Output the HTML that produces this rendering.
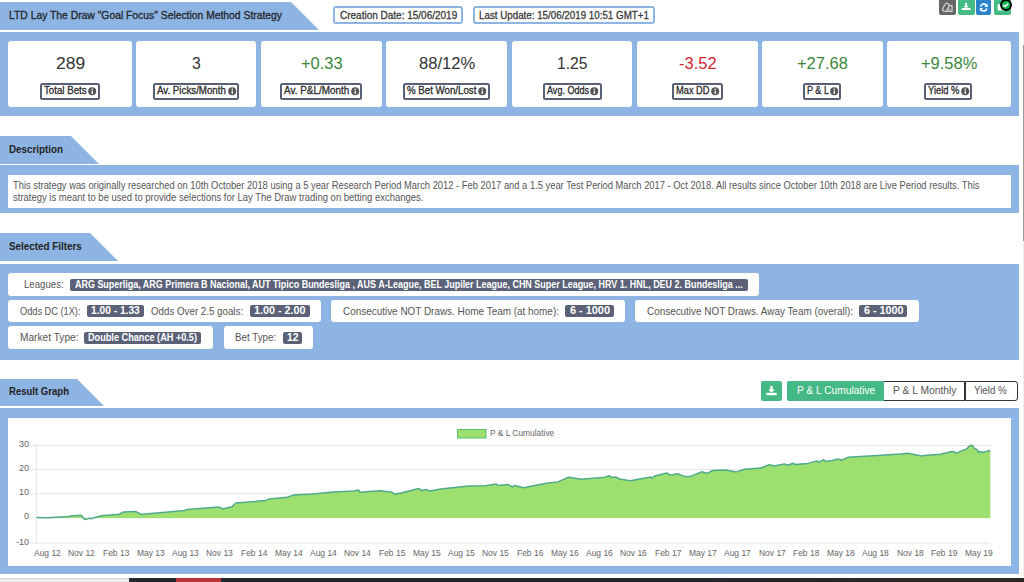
<!DOCTYPE html><html><head><meta charset="utf-8"><style>
html,body{margin:0;padding:0;width:1024px;height:582px;overflow:hidden;background:#fff;font-family:"Liberation Sans",sans-serif}
.t{position:absolute;white-space:nowrap;line-height:1;transform-origin:0 0}
.b{position:absolute}
</style></head><body>
<svg class="b" style="left:0;top:2px" width="321" height="28"><polygon points="0,0 291,0 319,28 0,28" fill="#8db4e2"/></svg>
<div class="t" style="left:9.00px;top:10.00px;font-size:11px;color:#23262e;transform:scaleX(0.9398);-webkit-text-stroke:0.3px #23262e;">LTD Lay The Draw "Goal Focus" Selection Method Strategy</div>
<div class="b" style="left:333px;top:5.5px;width:126px;height:14.5px;border:2px solid #8db4e2;border-radius:3px"></div>
<div class="t" style="left:340.20px;top:10.00px;font-size:11px;color:#3a3a3a;transform:scaleX(0.9085);-webkit-text-stroke:0.3px #3a3a3a;">Creation Date: 15/06/2019</div>
<div class="b" style="left:472.5px;top:5.5px;width:178px;height:14.5px;border:2px solid #8db4e2;border-radius:3px"></div>
<div class="t" style="left:478.90px;top:10.00px;font-size:11px;color:#3a3a3a;transform:scaleX(0.8891);-webkit-text-stroke:0.3px #3a3a3a;">Last Update: 15/06/2019 10:51 GMT+1</div>
<div class="b" style="left:939px;top:-3px;width:17px;height:17.6px;background:#666;border-radius:2px"></div>
<div class="b" style="left:958px;top:-3px;width:16.5px;height:17.6px;background:#45bb84;border-radius:2px"></div>
<div class="b" style="left:976px;top:-3px;width:15px;height:17.6px;background:#2b83cb;border-radius:2px"></div>
<div class="b" style="left:994px;top:-3px;width:17px;height:17.6px;background:#45bb84;border-radius:2px"></div>
<svg class="b" style="left:939px;top:0" width="17" height="15">
<path d="M8 5.6 h5 v5.9 h-5.6" fill="none" stroke="#d4d4d4" stroke-width="1.2"/>
<path d="M9.6 7.2 L12.3 10.8 h-3.8z" fill="#d4d4d4" opacity="0.6"/>
<rect x="-2.2" y="-4.3" width="4.4" height="8.6" rx="2.2" transform="translate(6.9 7.4) rotate(28)" fill="#666" stroke="#d4d4d4" stroke-width="1.2"/></svg>
<svg class="b" style="left:958px;top:0" width="17" height="15">
<path d="M7.1 2.8 h2 v3.1 h1.9 l-2.9 2.4 l-2.9 -2.4 h1.9z" fill="#fff"/><rect x="3.8" y="8" width="8.7" height="2" fill="#fff"/></svg>
<svg class="b" style="left:976.3px;top:0" width="15" height="15">
<path d="M4.6 6.6 a3.1 3.1 0 0 1 5.6 -1.4" fill="none" stroke="#fff" stroke-width="1.5"/><path d="M11.7 3.6 v3.3 h-3.3z" fill="#fff"/>
<path d="M10.8 8.3 a3.1 3.1 0 0 1 -5.6 1.4" fill="none" stroke="#fff" stroke-width="1.5"/><path d="M3.8 11.2 v-3.3 h3.3z" fill="#fff"/></svg>
<svg class="b" style="left:994px;top:0" width="30" height="16">
<rect x="3.7" y="4.3" width="7" height="6.2" fill="#fff"/>
<circle cx="12" cy="5" r="5" fill="#0fb34c" stroke="#000" stroke-width="1.9"/>
<path d="M9.3 4.9 l1.8 1.6 l3.2 -3" fill="none" stroke="#fff" stroke-width="1.6"/></svg>
<div class="b" style="left:1022.5px;top:0;width:1.5px;height:578px;background:#f0f0f0"></div>
<div class="b" style="left:1022.5px;top:45px;width:1.5px;height:196px;background:#9a9a9a"></div>
<div class="b" style="left:0;top:32px;width:1019px;height:84px;background:#8db4e2"></div>
<div class="b" style="left:8px;top:41px;width:124px;height:66px;background:#fff;border-radius:3px"></div>
<div class="b" style="left:136px;top:41px;width:120px;height:66px;background:#fff;border-radius:3px"></div>
<div class="b" style="left:261px;top:41px;width:121px;height:66px;background:#fff;border-radius:3px"></div>
<div class="b" style="left:386px;top:41px;width:121px;height:66px;background:#fff;border-radius:3px"></div>
<div class="b" style="left:512px;top:41px;width:120px;height:66px;background:#fff;border-radius:3px"></div>
<div class="b" style="left:637px;top:41px;width:121px;height:66px;background:#fff;border-radius:3px"></div>
<div class="b" style="left:762px;top:41px;width:121px;height:66px;background:#fff;border-radius:3px"></div>
<div class="b" style="left:887px;top:41px;width:124px;height:66px;background:#fff;border-radius:3px"></div>
<div class="t" style="left:55.50px;top:56.00px;font-size:16px;color:#333;transform:scaleX(1.0899);">289</div>
<div class="b" style="left:40.2px;top:83px;width:55.39999999999999px;height:12.5px;border:2px solid #596075;border-radius:2.5px;background:#fff"></div>
<div class="t" style="left:44.20px;top:85.00px;font-size:10.5px;color:#2b2b2b;transform:scaleX(0.9241);-webkit-text-stroke:0.3px #2b2b2b;">Total Bets</div>
<svg class="b" style="left:88.19999999999999px;top:86.6px" width="9" height="9"><circle cx="4.2" cy="4.2" r="4" fill="#555"/><rect x="3.6" y="3.6" width="1.3" height="3.3" fill="#fff"/><circle cx="4.25" cy="2.3" r="0.75" fill="#fff"/></svg>
<div class="t" style="left:191.70px;top:56.00px;font-size:16px;color:#333;transform:scaleX(0.9888);">3</div>
<div class="b" style="left:153.4px;top:83px;width:81.69999999999999px;height:12.5px;border:2px solid #596075;border-radius:2.5px;background:#fff"></div>
<div class="t" style="left:157.40px;top:85.00px;font-size:10.5px;color:#2b2b2b;transform:scaleX(0.9273);-webkit-text-stroke:0.3px #2b2b2b;">Av. Picks/Month</div>
<svg class="b" style="left:227.7px;top:86.6px" width="9" height="9"><circle cx="4.2" cy="4.2" r="4" fill="#555"/><rect x="3.6" y="3.6" width="1.3" height="3.3" fill="#fff"/><circle cx="4.25" cy="2.3" r="0.75" fill="#fff"/></svg>
<div class="t" style="left:300.50px;top:56.00px;font-size:16px;color:#3b873b;transform:scaleX(1.0272);">+0.33</div>
<div class="b" style="left:280.1px;top:83px;width:78.09999999999997px;height:12.5px;border:2px solid #596075;border-radius:2.5px;background:#fff"></div>
<div class="t" style="left:284.10px;top:85.00px;font-size:10.5px;color:#2b2b2b;transform:scaleX(0.9450);-webkit-text-stroke:0.3px #2b2b2b;">Av. P&amp;L/Month</div>
<svg class="b" style="left:350.8px;top:86.6px" width="9" height="9"><circle cx="4.2" cy="4.2" r="4" fill="#555"/><rect x="3.6" y="3.6" width="1.3" height="3.3" fill="#fff"/><circle cx="4.25" cy="2.3" r="0.75" fill="#fff"/></svg>
<div class="t" style="left:418.60px;top:56.00px;font-size:16px;color:#333;transform:scaleX(1.0350);">88/12%</div>
<div class="b" style="left:403.4px;top:83px;width:82.20000000000005px;height:12.5px;border:2px solid #596075;border-radius:2.5px;background:#fff"></div>
<div class="t" style="left:407.40px;top:85.00px;font-size:10.5px;color:#2b2b2b;transform:scaleX(0.9241);-webkit-text-stroke:0.3px #2b2b2b;">% Bet Won/Lost</div>
<svg class="b" style="left:478.20000000000005px;top:86.6px" width="9" height="9"><circle cx="4.2" cy="4.2" r="4" fill="#555"/><rect x="3.6" y="3.6" width="1.3" height="3.3" fill="#fff"/><circle cx="4.25" cy="2.3" r="0.75" fill="#fff"/></svg>
<div class="t" style="left:556.70px;top:56.00px;font-size:16px;color:#333;transform:scaleX(0.9807);">1.25</div>
<div class="b" style="left:542.8px;top:83px;width:54.80000000000007px;height:12.5px;border:2px solid #596075;border-radius:2.5px;background:#fff"></div>
<div class="t" style="left:546.80px;top:85.00px;font-size:10.5px;color:#2b2b2b;transform:scaleX(0.8607);-webkit-text-stroke:0.3px #2b2b2b;">Avg. Odds</div>
<svg class="b" style="left:590.2px;top:86.6px" width="9" height="9"><circle cx="4.2" cy="4.2" r="4" fill="#555"/><rect x="3.6" y="3.6" width="1.3" height="3.3" fill="#fff"/><circle cx="4.25" cy="2.3" r="0.75" fill="#fff"/></svg>
<div class="t" style="left:678.70px;top:56.00px;font-size:16px;color:#d0252f;transform:scaleX(1.0301);">-3.52</div>
<div class="b" style="left:672.3px;top:83px;width:46.30000000000007px;height:12.5px;border:2px solid #596075;border-radius:2.5px;background:#fff"></div>
<div class="t" style="left:676.30px;top:85.00px;font-size:10.5px;color:#2b2b2b;transform:scaleX(0.8839);-webkit-text-stroke:0.3px #2b2b2b;">Max DD</div>
<svg class="b" style="left:711.2px;top:86.6px" width="9" height="9"><circle cx="4.2" cy="4.2" r="4" fill="#555"/><rect x="3.6" y="3.6" width="1.3" height="3.3" fill="#fff"/><circle cx="4.25" cy="2.3" r="0.75" fill="#fff"/></svg>
<div class="t" style="left:797.10px;top:56.00px;font-size:16px;color:#3b873b;transform:scaleX(1.0283);">+27.68</div>
<div class="b" style="left:802.8px;top:83px;width:34.700000000000045px;height:12.5px;border:2px solid #596075;border-radius:2.5px;background:#fff"></div>
<div class="t" style="left:806.80px;top:85.00px;font-size:10.5px;color:#2b2b2b;transform:scaleX(0.8588);-webkit-text-stroke:0.3px #2b2b2b;">P &amp; L</div>
<svg class="b" style="left:830.1px;top:86.6px" width="9" height="9"><circle cx="4.2" cy="4.2" r="4" fill="#555"/><rect x="3.6" y="3.6" width="1.3" height="3.3" fill="#fff"/><circle cx="4.25" cy="2.3" r="0.75" fill="#fff"/></svg>
<div class="t" style="left:920.80px;top:56.00px;font-size:16px;color:#3b873b;transform:scaleX(1.0293);">+9.58%</div>
<div class="b" style="left:924.1px;top:83px;width:44.19999999999993px;height:12.5px;border:2px solid #596075;border-radius:2.5px;background:#fff"></div>
<div class="t" style="left:928.10px;top:85.00px;font-size:10.5px;color:#2b2b2b;transform:scaleX(0.8920);-webkit-text-stroke:0.3px #2b2b2b;">Yield %</div>
<svg class="b" style="left:960.9px;top:86.6px" width="9" height="9"><circle cx="4.2" cy="4.2" r="4" fill="#555"/><rect x="3.6" y="3.6" width="1.3" height="3.3" fill="#fff"/><circle cx="4.25" cy="2.3" r="0.75" fill="#fff"/></svg>
<svg class="b" style="left:0;top:136px" width="101" height="28"><polygon points="0,0 71,0 99,28 0,28" fill="#8db4e2"/></svg>
<div class="t" style="left:8.50px;top:145.00px;font-size:10px;font-weight:bold;color:#222;transform:scaleX(0.9836);">Description</div>
<div class="b" style="left:0;top:165px;width:1019px;height:48px;background:#8db4e2"></div>
<div class="b" style="left:8px;top:175px;width:1003px;height:33px;background:#fff"></div>
<div class="t" style="left:13.10px;top:180.00px;font-size:10.5px;color:#555;transform:scaleX(0.8910);">This strategy was originally researched on 10th October 2018 using a 5 year Research Period March 2012 - Feb 2017 and a 1.5 year Test Period March 2017 - Oct 2018. All results since October 10th 2018 are Live Period results. This</div>
<div class="t" style="left:13.10px;top:192.00px;font-size:10.5px;color:#555;transform:scaleX(0.9030);">strategy is meant to be used to provide selections for Lay The Draw trading on betting exchanges.</div>
<svg class="b" style="left:0;top:233px" width="120" height="28"><polygon points="0,0 90,0 118,28 0,28" fill="#8db4e2"/></svg>
<div class="t" style="left:8.50px;top:242.00px;font-size:10px;font-weight:bold;color:#222;transform:scaleX(0.9851);">Selected Filters</div>
<div class="b" style="left:0;top:264px;width:1019px;height:96px;background:#8db4e2"></div>
<div class="b" style="left:8px;top:273px;width:751px;height:22.5px;background:#fff;border-radius:3px"></div>
<div class="t" style="left:23.75px;top:279.00px;font-size:10.5px;color:#555;transform:scaleX(0.9178);">Leagues:</div>
<div class="b" style="left:70.2px;top:279px;width:677.5999999999999px;height:11.600000000000023px;background:#5b6277;border-radius:2px"></div>
<div class="t" style="left:74.80px;top:280.00px;font-size:10px;font-weight:bold;color:#fff;transform:scaleX(0.8959);">ARG Superliga, ARG Primera B Nacional, AUT Tipico Bundesliga , AUS A-League, BEL Jupiler League, CHN Super League, HRV 1. HNL, DEU 2. Bundesliga ...</div>
<div class="b" style="left:8px;top:300.3px;width:312.8px;height:22.19999999999999px;background:#fff;border-radius:3px"></div>
<div class="t" style="left:20.20px;top:306.00px;font-size:10.5px;color:#555;transform:scaleX(0.8779);">Odds DC (1X):</div>
<div class="b" style="left:86.9px;top:305px;width:57.5px;height:11.75px;background:#5b6277;border-radius:2px"></div>
<div class="t" style="left:91.25px;top:306.00px;font-size:10px;font-weight:bold;color:#fff;transform:scaleX(1.0199);">1.00 - 1.33</div>
<div class="t" style="left:151.40px;top:306.00px;font-size:10.5px;color:#555;transform:scaleX(0.9284);">Odds Over 2.5 goals:</div>
<div class="b" style="left:249.9px;top:305.3px;width:59.79999999999998px;height:11.399999999999977px;background:#5b6277;border-radius:2px"></div>
<div class="t" style="left:254.00px;top:306.00px;font-size:10px;font-weight:bold;color:#fff;transform:scaleX(1.0774);">1.00 - 2.00</div>
<div class="b" style="left:331px;top:300.3px;width:293.70000000000005px;height:22.19999999999999px;background:#fff;border-radius:3px"></div>
<div class="t" style="left:343.00px;top:306.00px;font-size:10.5px;color:#555;transform:scaleX(0.9457);">Consecutive NOT Draws. Home Team (at home):</div>
<div class="b" style="left:565.2px;top:305.3px;width:48.39999999999998px;height:11.399999999999977px;background:#5b6277;border-radius:2px"></div>
<div class="t" style="left:569.50px;top:306.00px;font-size:10px;font-weight:bold;color:#fff;transform:scaleX(1.0899);">6 - 1000</div>
<div class="b" style="left:634.9px;top:300.3px;width:283.70000000000005px;height:22.19999999999999px;background:#fff;border-radius:3px"></div>
<div class="t" style="left:646.60px;top:306.00px;font-size:10.5px;color:#555;transform:scaleX(0.9436);">Consecutive NOT Draws. Away Team (overall):</div>
<div class="b" style="left:859px;top:305.3px;width:48.200000000000045px;height:11.399999999999977px;background:#5b6277;border-radius:2px"></div>
<div class="t" style="left:863.50px;top:306.00px;font-size:10px;font-weight:bold;color:#fff;transform:scaleX(1.0763);">6 - 1000</div>
<div class="b" style="left:8px;top:326.4px;width:204.6px;height:22.5px;background:#fff;border-radius:3px"></div>
<div class="t" style="left:20.00px;top:332.00px;font-size:10.5px;color:#555;transform:scaleX(0.9669);">Market Type:</div>
<div class="b" style="left:84.1px;top:332.3px;width:116.9px;height:11.599999999999966px;background:#5b6277;border-radius:2px"></div>
<div class="t" style="left:88.00px;top:333.00px;font-size:10px;font-weight:bold;color:#fff;transform:scaleX(0.9144);">Double Chance (AH +0.5)</div>
<div class="b" style="left:224.1px;top:326.4px;width:89.1px;height:22.5px;background:#fff;border-radius:3px"></div>
<div class="t" style="left:235.30px;top:332.00px;font-size:10.5px;color:#555;transform:scaleX(0.9321);">Bet Type:</div>
<div class="b" style="left:282.7px;top:332.3px;width:19.0px;height:11.300000000000011px;background:#5b6277;border-radius:2px"></div>
<div class="t" style="left:286.50px;top:333.00px;font-size:10px;font-weight:bold;color:#fff;transform:scaleX(1.0360);">12</div>
<svg class="b" style="left:0;top:379px" width="106" height="27"><polygon points="0,0 77,0 104,27 0,27" fill="#8db4e2"/></svg>
<div class="t" style="left:8.60px;top:387.00px;font-size:10px;font-weight:bold;color:#222;transform:scaleX(0.9554);">Result Graph</div>
<div class="b" style="left:761px;top:381px;width:21px;height:20px;background:#45b985;border-radius:2px"></div>
<svg class="b" style="left:761px;top:381px" width="21" height="20">
<path d="M9.3 5 h2.4 v3.6 h2.1 l-3.3 3.2 l-3.3 -3.2 h2.1z" fill="#fff"/><rect x="5.3" y="11.8" width="10.4" height="2.4" fill="#fff"/></svg>
<div class="b" style="left:787px;top:381px;width:97px;height:20px;background:#45b985;border-radius:2px 0 0 2px"></div>
<div class="t" style="left:796.50px;top:385.00px;font-size:10.5px;color:#fff;transform:scaleX(0.9714);">P &amp; L Cumulative</div>
<div class="b" style="left:883.8px;top:381px;width:80px;height:18px;border:1px solid #333;border-left:none"></div>
<div class="t" style="left:892.60px;top:385.00px;font-size:10.5px;color:#555;transform:scaleX(0.9784);">P &amp; L Monthly</div>
<div class="b" style="left:964.5px;top:381px;width:51px;height:18px;border:1px solid #333;border-radius:0 3px 3px 0"></div>
<div class="t" style="left:974.20px;top:385.00px;font-size:10.5px;color:#555;transform:scaleX(0.9318);">Yield %</div>
<div class="b" style="left:0;top:408px;width:1019px;height:165.5px;background:#8db4e2"></div>
<div class="b" style="left:8px;top:418px;width:1003px;height:148px;background:#fff"></div>
<svg class="b" style="left:0;top:0" width="1024" height="582"><line x1="29.5" x2="990.3" y1="445.4" y2="445.4" stroke="#e4e4e4" stroke-width="1"/><line x1="29.5" x2="990.3" y1="469.6" y2="469.6" stroke="#e4e4e4" stroke-width="1"/><line x1="29.5" x2="990.3" y1="493.8" y2="493.8" stroke="#e4e4e4" stroke-width="1"/><line x1="29.5" x2="990.3" y1="517.9" y2="517.9" stroke="#e4e4e4" stroke-width="1"/><line x1="29.5" x2="990.3" y1="543.1" y2="543.1" stroke="#e4e4e4" stroke-width="1"/><line x1="36.3" x2="36.3" y1="445" y2="543.6" stroke="#e4e4e4" stroke-width="1"/><polygon points="36.4,517.9 36.4,517.5 47.6,517.7 68.7,516.6 72.2,515.7 81.3,515.2 83.9,518.7 85.1,519.6 89.8,518.1 90.9,518.9 93.9,517.7 101.5,515.7 119.1,514.2 123.8,511.9 135.5,511.4 140.7,514.2 145.0,514.0 156.7,513.1 184.8,510.4 187.2,509.5 218.8,506.9 222.9,509.0 229.4,507.3 231.7,506.9 235.8,503.0 255.2,501.6 261.0,500.7 265.9,500.4 269.4,498.9 287.0,497.3 294.0,494.9 312.7,494.0 333.8,491.9 353.8,491.1 358.4,490.1 360.2,492.2 379.7,490.7 392.6,492.3 393.8,494.3 400.8,493.1 410.2,490.7 418.4,488.4 421.9,490.5 426.6,489.6 429.5,491.0 440.6,489.0 468.8,486.1 485.2,485.8 490.0,484.9 496.4,484.0 498.2,485.5 508.2,484.6 512.3,486.9 514.6,485.4 523.4,487.7 546.3,483.2 558.0,481.9 568.5,477.3 581.4,479.3 604.8,477.3 609.1,475.7 612.0,477.6 615.5,476.9 619.6,479.0 630.2,480.7 650.7,476.9 651.9,478.2 655.4,475.7 667.1,473.1 670.0,475.2 677.7,473.7 684.7,476.6 690.6,476.4 694.1,474.9 702.3,471.7 705.2,473.1 708.1,472.9 712.8,470.5 725.0,470.0 727.0,470.2 736.4,471.9 744.6,469.3 761.0,468.1 769.2,464.6 773.9,466.0 784.5,464.0 787.4,465.2 793.2,463.2 795.0,464.6 807.9,463.4 817.3,460.9 819.0,462.3 823.7,459.7 825.5,461.4 832.5,460.5 837.9,459.0 842.0,460.2 847.9,457.3 881.9,455.2 900.6,454.0 907.7,453.2 921.7,455.9 926.4,455.2 940.5,454.3 951.9,451.4 953.9,451.7 956.3,453.3 960.1,451.4 966.9,449.0 969.0,446.3 971.0,445.3 972.7,445.8 974.4,448.3 977.2,449.7 978.5,452.6 980.6,451.4 982.6,452.4 989.8,450.6 990.3,450.6 990.3,517.9" fill="#9de070"/><polyline points="36.4,517.5 47.6,517.7 68.7,516.6 72.2,515.7 81.3,515.2 83.9,518.7 85.1,519.6 89.8,518.1 90.9,518.9 93.9,517.7 101.5,515.7 119.1,514.2 123.8,511.9 135.5,511.4 140.7,514.2 145.0,514.0 156.7,513.1 184.8,510.4 187.2,509.5 218.8,506.9 222.9,509.0 229.4,507.3 231.7,506.9 235.8,503.0 255.2,501.6 261.0,500.7 265.9,500.4 269.4,498.9 287.0,497.3 294.0,494.9 312.7,494.0 333.8,491.9 353.8,491.1 358.4,490.1 360.2,492.2 379.7,490.7 392.6,492.3 393.8,494.3 400.8,493.1 410.2,490.7 418.4,488.4 421.9,490.5 426.6,489.6 429.5,491.0 440.6,489.0 468.8,486.1 485.2,485.8 490.0,484.9 496.4,484.0 498.2,485.5 508.2,484.6 512.3,486.9 514.6,485.4 523.4,487.7 546.3,483.2 558.0,481.9 568.5,477.3 581.4,479.3 604.8,477.3 609.1,475.7 612.0,477.6 615.5,476.9 619.6,479.0 630.2,480.7 650.7,476.9 651.9,478.2 655.4,475.7 667.1,473.1 670.0,475.2 677.7,473.7 684.7,476.6 690.6,476.4 694.1,474.9 702.3,471.7 705.2,473.1 708.1,472.9 712.8,470.5 725.0,470.0 727.0,470.2 736.4,471.9 744.6,469.3 761.0,468.1 769.2,464.6 773.9,466.0 784.5,464.0 787.4,465.2 793.2,463.2 795.0,464.6 807.9,463.4 817.3,460.9 819.0,462.3 823.7,459.7 825.5,461.4 832.5,460.5 837.9,459.0 842.0,460.2 847.9,457.3 881.9,455.2 900.6,454.0 907.7,453.2 921.7,455.9 926.4,455.2 940.5,454.3 951.9,451.4 953.9,451.7 956.3,453.3 960.1,451.4 966.9,449.0 969.0,446.3 971.0,445.3 972.7,445.8 974.4,448.3 977.2,449.7 978.5,452.6 980.6,451.4 982.6,452.4 989.8,450.6 990.3,450.6" fill="none" stroke="#50ab8b" stroke-width="1.5" stroke-linejoin="round"/><rect x="457.5" y="429.5" width="28.5" height="8.5" fill="#9de070" stroke="#5cbf6e" stroke-width="1"/></svg>
<div class="t" style="left:490.10px;top:429.00px;font-size:9px;color:#666;transform:scaleX(0.9304);">P &amp; L Cumulative</div>
<div class="t" style="left:19.10px;top:440.00px;font-size:9px;color:#666;transform:scaleX(1.0000);">30</div>
<div class="t" style="left:19.10px;top:464.00px;font-size:9px;color:#666;transform:scaleX(1.0000);">20</div>
<div class="t" style="left:19.10px;top:488.00px;font-size:9px;color:#666;transform:scaleX(1.0000);">10</div>
<div class="t" style="left:24.10px;top:512.00px;font-size:9px;color:#666;transform:scaleX(1.0000);">0</div>
<div class="t" style="left:16.10px;top:538.00px;font-size:9px;color:#666;transform:scaleX(1.0000);">-10</div>
<div class="t" style="left:33.61px;top:549.00px;font-size:9px;color:#666;transform:scaleX(0.9400);">Aug 12</div>
<div class="t" style="left:68.13px;top:549.00px;font-size:9px;color:#666;transform:scaleX(0.9400);">Nov 12</div>
<div class="t" style="left:102.88px;top:549.00px;font-size:9px;color:#666;transform:scaleX(0.9400);">Feb 13</div>
<div class="t" style="left:136.69px;top:549.00px;font-size:9px;color:#666;transform:scaleX(0.9400);">May 13</div>
<div class="t" style="left:171.69px;top:549.00px;font-size:9px;color:#666;transform:scaleX(0.9400);">Aug 13</div>
<div class="t" style="left:206.21px;top:549.00px;font-size:9px;color:#666;transform:scaleX(0.9400);">Nov 13</div>
<div class="t" style="left:240.96px;top:549.00px;font-size:9px;color:#666;transform:scaleX(0.9400);">Feb 14</div>
<div class="t" style="left:274.77px;top:549.00px;font-size:9px;color:#666;transform:scaleX(0.9400);">May 14</div>
<div class="t" style="left:309.77px;top:549.00px;font-size:9px;color:#666;transform:scaleX(0.9400);">Aug 14</div>
<div class="t" style="left:344.29px;top:549.00px;font-size:9px;color:#666;transform:scaleX(0.9400);">Nov 14</div>
<div class="t" style="left:379.04px;top:549.00px;font-size:9px;color:#666;transform:scaleX(0.9400);">Feb 15</div>
<div class="t" style="left:412.86px;top:549.00px;font-size:9px;color:#666;transform:scaleX(0.9400);">May 15</div>
<div class="t" style="left:447.85px;top:549.00px;font-size:9px;color:#666;transform:scaleX(0.9400);">Aug 15</div>
<div class="t" style="left:482.37px;top:549.00px;font-size:9px;color:#666;transform:scaleX(0.9400);">Nov 15</div>
<div class="t" style="left:517.12px;top:549.00px;font-size:9px;color:#666;transform:scaleX(0.9400);">Feb 16</div>
<div class="t" style="left:550.94px;top:549.00px;font-size:9px;color:#666;transform:scaleX(0.9400);">May 16</div>
<div class="t" style="left:585.93px;top:549.00px;font-size:9px;color:#666;transform:scaleX(0.9400);">Aug 16</div>
<div class="t" style="left:620.45px;top:549.00px;font-size:9px;color:#666;transform:scaleX(0.9400);">Nov 16</div>
<div class="t" style="left:655.20px;top:549.00px;font-size:9px;color:#666;transform:scaleX(0.9400);">Feb 17</div>
<div class="t" style="left:689.02px;top:549.00px;font-size:9px;color:#666;transform:scaleX(0.9400);">May 17</div>
<div class="t" style="left:724.01px;top:549.00px;font-size:9px;color:#666;transform:scaleX(0.9400);">Aug 17</div>
<div class="t" style="left:758.53px;top:549.00px;font-size:9px;color:#666;transform:scaleX(0.9400);">Nov 17</div>
<div class="t" style="left:793.28px;top:549.00px;font-size:9px;color:#666;transform:scaleX(0.9400);">Feb 18</div>
<div class="t" style="left:827.10px;top:549.00px;font-size:9px;color:#666;transform:scaleX(0.9400);">May 18</div>
<div class="t" style="left:862.09px;top:549.00px;font-size:9px;color:#666;transform:scaleX(0.9400);">Aug 18</div>
<div class="t" style="left:896.61px;top:549.00px;font-size:9px;color:#666;transform:scaleX(0.9400);">Nov 18</div>
<div class="t" style="left:931.36px;top:549.00px;font-size:9px;color:#666;transform:scaleX(0.9400);">Feb 19</div>
<div class="t" style="left:965.18px;top:549.00px;font-size:9px;color:#666;transform:scaleX(0.9400);">May 19</div>
<div class="b" style="left:0;top:578px;width:1024px;height:4px;background:#24272c"></div>
<div class="b" style="left:0;top:578px;width:129px;height:4px;background:#ececec;border-top:1px solid #d6d6d6;box-sizing:border-box"></div>
<div class="b" style="left:176px;top:578px;width:45px;height:4px;background:#b83236"></div>
<div class="b" style="left:700px;top:578px;width:324px;height:4px;background:linear-gradient(90deg,#24272c,#2e2721)"></div>
</body></html>
